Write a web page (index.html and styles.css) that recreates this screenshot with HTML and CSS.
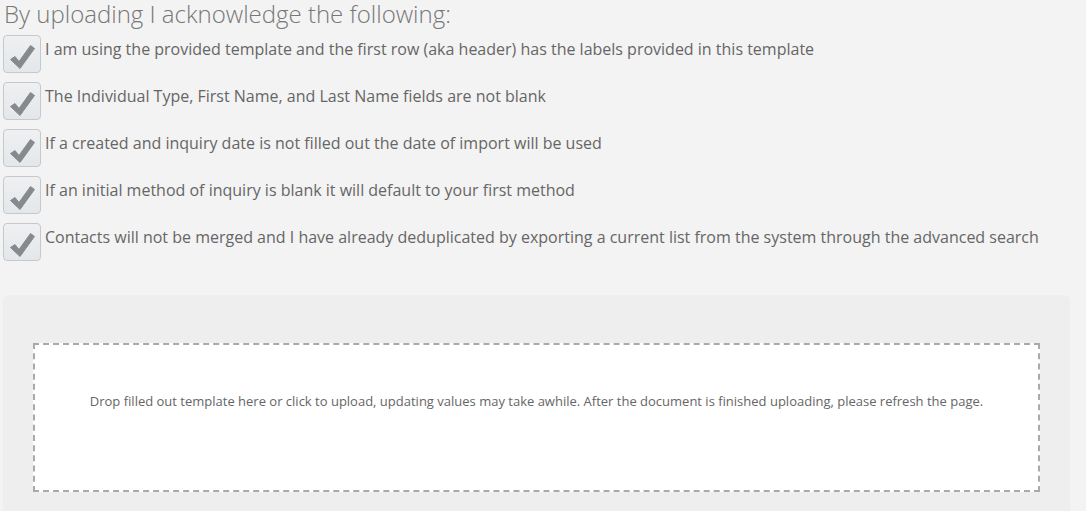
FILE: index.html
```html
<!DOCTYPE html>
<html>
<head>
<meta charset="utf-8">
<link rel="stylesheet" href="styles.css">
</head>
<body>
<div class="page">
  <h2 class="title">By uploading I acknowledge the following:</h2>
  <ul class="ack-list">
    <li class="ack"><span class="box"><svg viewBox="0 0 38 38" width="38" height="38"><path d="M7.5 24.5 L12 21.5 L16 26.5 L27.5 10.5 L31.5 13.5 L17 33.5 Z" fill="#878a8d" stroke="#878a8d" stroke-width="1" stroke-linejoin="round"/></svg></span><span class="label">I am using the provided template and the first row (aka header) has the labels provided in this template</span></li>
    <li class="ack"><span class="box"><svg viewBox="0 0 38 38" width="38" height="38"><path d="M7.5 24.5 L12 21.5 L16 26.5 L27.5 10.5 L31.5 13.5 L17 33.5 Z" fill="#878a8d" stroke="#878a8d" stroke-width="1" stroke-linejoin="round"/></svg></span><span class="label">The Individual Type, First Name, and Last Name fields are not blank</span></li>
    <li class="ack"><span class="box"><svg viewBox="0 0 38 38" width="38" height="38"><path d="M7.5 24.5 L12 21.5 L16 26.5 L27.5 10.5 L31.5 13.5 L17 33.5 Z" fill="#878a8d" stroke="#878a8d" stroke-width="1" stroke-linejoin="round"/></svg></span><span class="label">If a created and inquiry date is not filled out the date of import will be used</span></li>
    <li class="ack"><span class="box"><svg viewBox="0 0 38 38" width="38" height="38"><path d="M7.5 24.5 L12 21.5 L16 26.5 L27.5 10.5 L31.5 13.5 L17 33.5 Z" fill="#878a8d" stroke="#878a8d" stroke-width="1" stroke-linejoin="round"/></svg></span><span class="label">If an initial method of inquiry is blank it will default to your first method</span></li>
    <li class="ack"><span class="box"><svg viewBox="0 0 38 38" width="38" height="38"><path d="M7.5 24.5 L12 21.5 L16 26.5 L27.5 10.5 L31.5 13.5 L17 33.5 Z" fill="#878a8d" stroke="#878a8d" stroke-width="1" stroke-linejoin="round"/></svg></span><span class="label">Contacts will not be merged and I have already deduplicated by exporting a current list from the system through the advanced search</span></li>
  </ul>
  <div class="panel">
    <div class="dropzone">Drop filled out template here or click to upload, updating values may take awhile. After the document is finished uploading, please refresh the page.</div>
  </div>
</div>
</body>
</html>
```

FILE: styles.css
```css
html, body {
  margin: 0;
  padding: 0;
  background: #f3f3f3;
  font-family: "Open Sans", "Liberation Sans", sans-serif;
  color: #666;
  overflow: hidden;
}
.page {
  padding: 0 16px 0 3px;
}
.title {
  margin: 0;
  font-weight: 300;
  font-size: 24px;
  line-height: 28px;
  color: #777;
  padding-left: 1px;
}
.ack-list {
  list-style: none;
  margin: 7px 0 0;
  padding: 0;
  display: flex;
  flex-direction: column;
  gap: 9px;
}
.ack {
  display: flex;
  align-items: flex-start;
  gap: 4px;
}
.box {
  width: 36px;
  height: 36px;
  border: 1px solid #c6c9cc;
  border-radius: 4px;
  background: linear-gradient(#eef0f2, #e4e7ea);
  position: relative;
  box-sizing: content-box;
  flex: none;
  overflow: hidden;
}
.box svg {
  display: block;
  margin: -1px 0 0 -1px;
}
.label {
  font-size: 16px;
  line-height: 22px;
  color: #666;
  padding-top: 3px;
}
.panel {
  margin-top: 34px;
  background: #eeeeee;
  border-radius: 6px 6px 0 0;
  padding: 48px 30px 20px;
}
.dropzone {
  background: #fff;
  border: 2px dashed #aaa;
  height: 145px;
  box-sizing: content-box;
  padding: 0;
  text-align: center;
  font-size: 13px;
  line-height: 18px;
  color: #666;
}
.dropzone::before {
  content: "";
  display: block;
  height: 47px;
}
```
